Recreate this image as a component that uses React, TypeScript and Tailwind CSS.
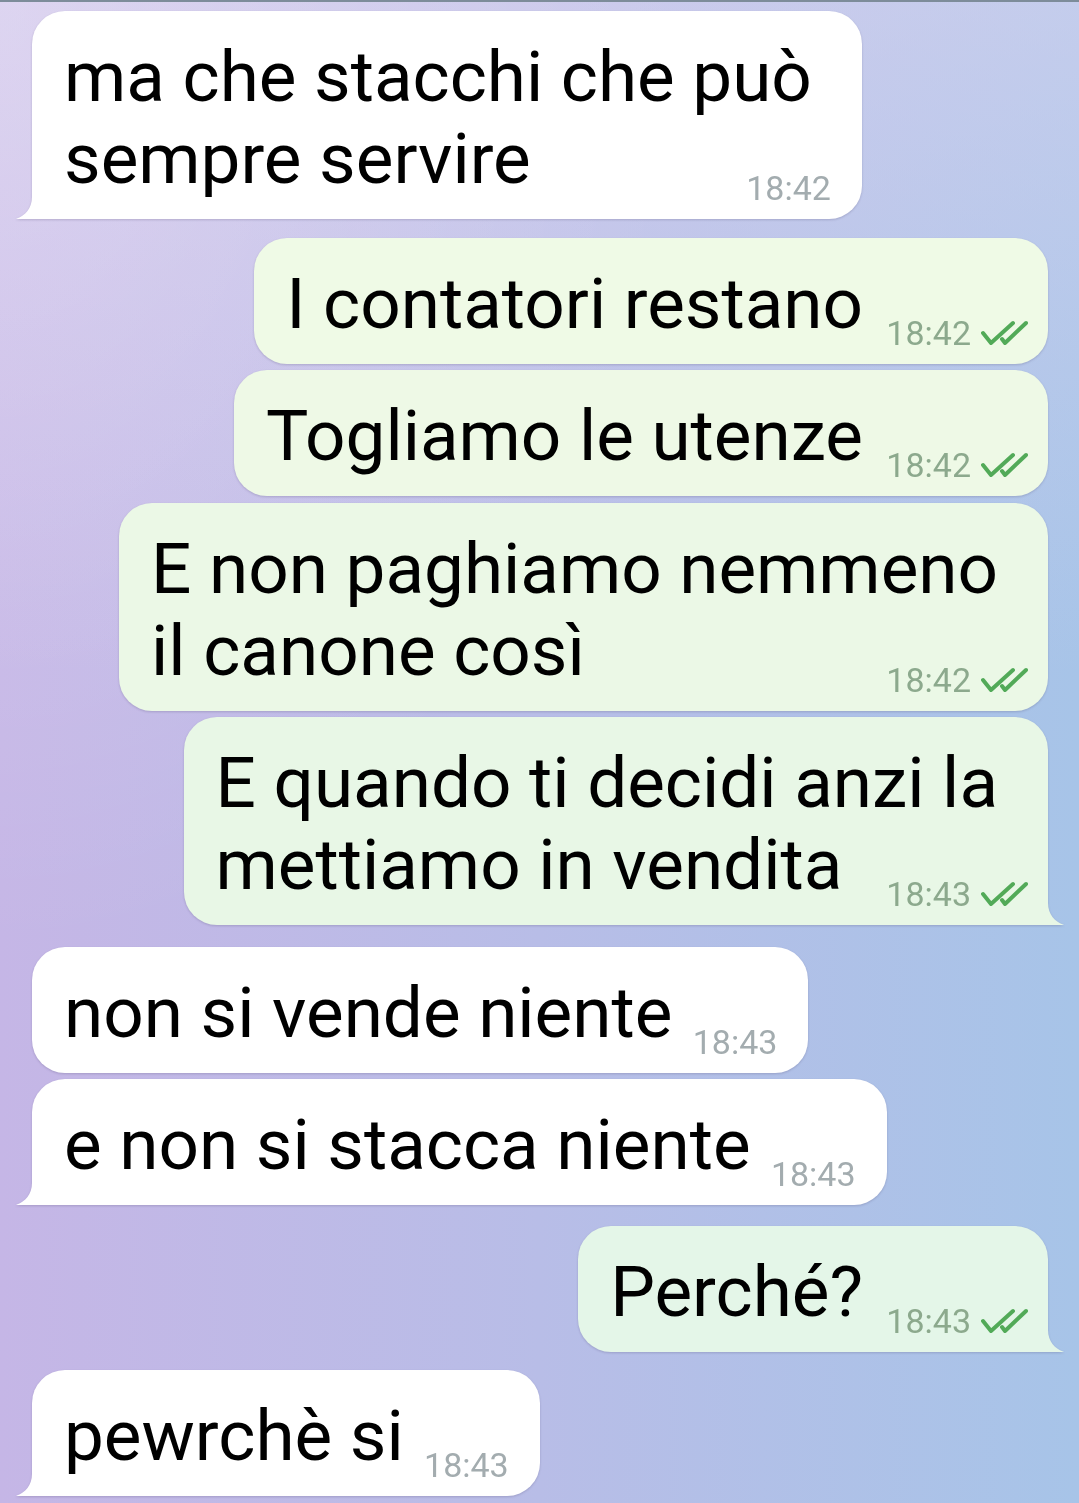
type Msg = {
  lines: string[]
  time: string
  out?: boolean
  tail?: boolean
  bg?: string
  mt: string
}

const messages: Msg[] = [
  { lines: ["ma che stacchi che può", "sempre servire"], time: "18:42", tail: true, mt: "mt-[9px]" },
  { lines: ["I contatori restano"], time: "18:42", out: true, bg: "bg-[#effae6]", mt: "mt-[19px]" },
  { lines: ["Togliamo le utenze"], time: "18:42", out: true, bg: "bg-[#eef9e6]", mt: "mt-[6px]" },
  { lines: ["E non paghiamo nemmeno", "il canone così"], time: "18:42", out: true, bg: "bg-[#ebf8e6]", mt: "mt-[7px]" },
  { lines: ["E quando ti decidi anzi la", "mettiamo in vendita"], time: "18:43", out: true, tail: true, bg: "bg-[#e8f7e6]", mt: "mt-[6px]" },
  { lines: ["non si vende niente"], time: "18:43", mt: "mt-[22px]" },
  { lines: ["e non si stacca niente"], time: "18:43", tail: true, mt: "mt-[6px]" },
  { lines: ["Perché?"], time: "18:43", out: true, tail: true, bg: "bg-[#e4f6e8]", mt: "mt-[21px]" },
  { lines: ["pewrchè si"], time: "18:43", tail: true, mt: "mt-[18px]" },
]

const Ticks = () => (
  <svg width="47" height="26" viewBox="0 0 47 26" fill="none" stroke="#52aa58" strokeWidth="4" strokeLinecap="round" strokeLinejoin="round">
    <path d="M2 13 L10 23 L32 3" />
    <path d="M21 19 L24 23 L45 3" />
  </svg>
)

const Tail = ({ out, fill }: { out?: boolean; fill: string }) => (
  <svg
    width="18"
    height="28"
    viewBox="0 0 18 28"
    className={out ? "absolute right-[-16px] bottom-0 -scale-x-100" : "absolute left-[-16px] bottom-0"}
  >
    <path d="M16 0 L16 6 C16 17 9 25 1 27.4 L0 28 L18 28 L18 0 Z" className={fill} />
  </svg>
)

const Bubble = ({ m }: { m: Msg }) => {
  const tailFill = m.out
    ? m.bg === "bg-[#e4f6e8]" ? "fill-[#e4f6e8]" : "fill-[#e8f7e6]"
    : "fill-white"
  return (
    <div className={`${m.mt} ${m.out ? "self-end" : "self-start"}`}>
      <div
        className={`relative rounded-[33px] pl-[32px] pr-[50px] pt-[25px] pb-[19px] text-[71px] leading-[82px] text-black drop-shadow-[0_1px_1px_rgba(60,50,90,0.22)] ${
          m.out ? m.bg : "bg-white"
        } ${m.tail ? (m.out ? "rounded-br-none" : "rounded-bl-none") : ""}`}
      >
        {m.lines.map((l, i) => (
          <div key={i} className="whitespace-nowrap">
            {l}
            {i === m.lines.length - 1 && (
              <span className={`inline-block ${m.out ? "w-[135px]" : "w-[86px]"}`} />
            )}
          </div>
        ))}
        <div
          className={`absolute bottom-[11px] flex items-center gap-[10px] text-[34px] leading-[40px] ${
            m.out ? "right-[20px] text-[#8ca98d]" : "right-[31px] text-[#a3acaf]"
          }`}
        >
          <span>{m.time}</span>
          {m.out && <Ticks />}
        </div>
        {m.tail && <Tail out={m.out} fill={tailFill} />}
      </div>
    </div>
  )
}

export default function App() {
  return (
    <div className="w-[1079px] h-[1503px] overflow-hidden font-[family-name:Roboto,sans-serif] bg-[radial-gradient(ellipse_at_0%_0%,rgba(255,255,255,0.25)_0%,rgba(255,255,255,0)_45%),linear-gradient(180deg,rgba(220,212,240,0.55)_0%,rgba(220,212,240,0)_45%),linear-gradient(90deg,#c5b6e6_0%,#b8bde7_50%,#a7c4e8_100%)]">
      <div className="h-[2px] bg-[#7d8c9a]" />
      <div className="flex flex-col pl-[32px] pr-[31px]">
        {messages.map((m, i) => (
          <Bubble key={i} m={m} />
        ))}
      </div>
    </div>
  )
}
